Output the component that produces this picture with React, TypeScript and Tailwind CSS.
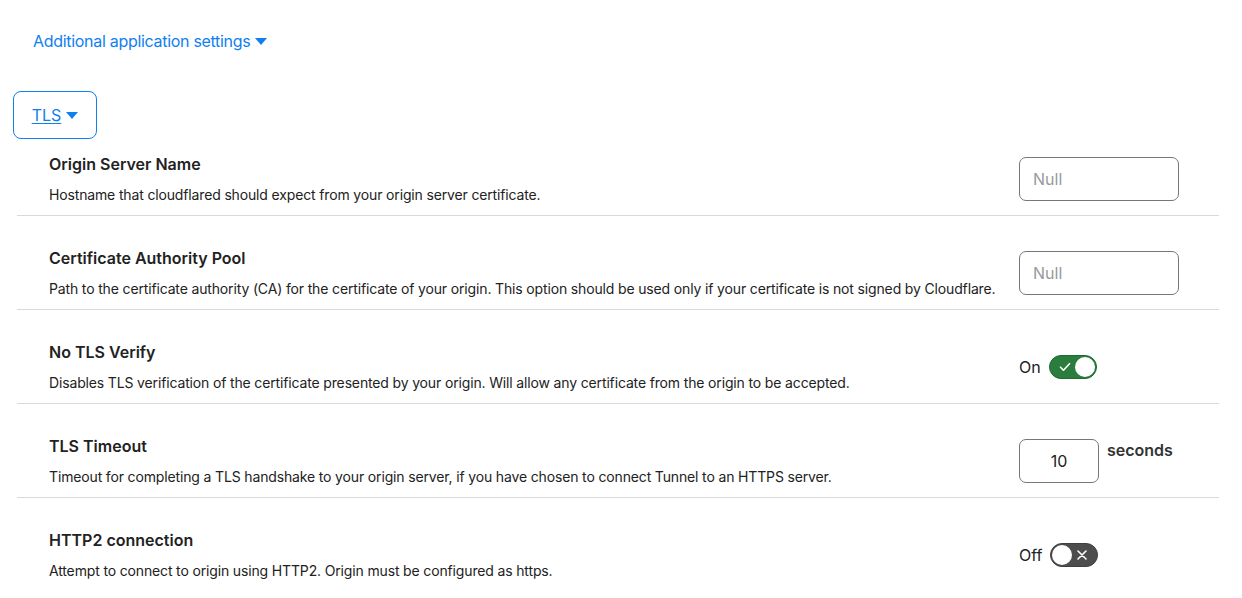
import { useState } from "react";

type Setting = {
  title: string;
  description: string;
  kind: "text" | "toggle" | "number";
  value?: string;
  on?: boolean;
};

const settings: Setting[] = [
  {
    title: "Origin Server Name",
    description: "Hostname that cloudflared should expect from your origin server certificate.",
    kind: "text",
  },
  {
    title: "Certificate Authority Pool",
    description:
      "Path to the certificate authority (CA) for the certificate of your origin. This option should be used only if your certificate is not signed by Cloudflare.",
    kind: "text",
  },
  {
    title: "No TLS Verify",
    description:
      "Disables TLS verification of the certificate presented by your origin. Will allow any certificate from the origin to be accepted.",
    kind: "toggle",
    on: true,
  },
  {
    title: "TLS Timeout",
    description:
      "Timeout for completing a TLS handshake to your origin server, if you have chosen to connect Tunnel to an HTTPS server.",
    kind: "number",
    value: "10",
  },
  {
    title: "HTTP2 connection",
    description: "Attempt to connect to origin using HTTP2. Origin must be configured as https.",
    kind: "toggle",
    on: false,
  },
];

function Caret() {
  return (
    <svg width="12" height="7" viewBox="0 0 12 7" className="ml-[5px]">
      <path d="M0 0h12L6 7z" fill="#1080f0" />
    </svg>
  );
}

function Toggle({ initial }: { initial: boolean }) {
  const [on, setOn] = useState(initial);
  return (
    <button onClick={() => setOn(!on)} className="flex items-center gap-[8px]">
      <span className="text-[16px] text-[#222]">{on ? "On" : "Off"}</span>
      {on ? (
        <span className="relative flex h-[24px] w-[48px] items-center rounded-full border border-[#1f6a33] bg-[#2b7d3e]">
          <svg width="12" height="10" viewBox="0 0 12 10" className="ml-[9px]">
            <path d="M1.5 5.2l3 3 6-6.5" fill="none" stroke="#fff" strokeWidth="1.6" strokeLinecap="round" strokeLinejoin="round" />
          </svg>
          <span className="absolute right-[1px] top-[1px] h-[20px] w-[20px] rounded-full bg-white" />
        </span>
      ) : (
        <span className="relative flex h-[24px] w-[48px] items-center justify-end rounded-full border border-[#3f3f3f] bg-[#4d4d4d]">
          <svg width="10" height="10" viewBox="0 0 10 10" className="mr-[10px]">
            <path d="M1 1l8 8M9 1l-8 8" stroke="#fff" strokeWidth="1.6" strokeLinecap="round" />
          </svg>
          <span className="absolute left-[1px] top-[1px] h-[20px] w-[20px] rounded-full bg-white" />
        </span>
      )}
    </button>
  );
}

function Control({ s }: { s: Setting }) {
  if (s.kind === "text") {
    return (
      <input
        placeholder="Null"
        className="h-[44px] w-[160px] rounded-[7px] border border-[#777] px-[13px] text-[16px] text-[#222] outline-none placeholder:text-[#999]"
      />
    );
  }
  if (s.kind === "number") {
    return (
      <div className="flex items-start gap-[8px]">
        <input
          defaultValue={s.value}
          className="h-[44px] w-[80px] rounded-[7px] border border-[#777] text-center text-[16px] text-[#222] outline-none"
        />
        <span className="-mt-[1px] text-[16px] font-semibold text-[#333]">seconds</span>
      </div>
    );
  }
  return <Toggle initial={!!s.on} />;
}

export default function App() {
  return (
    <div className="min-h-[598px] w-full bg-white font-['Inter','Noto_Sans',sans-serif] text-[#222]">
      <div className="px-[13px] pt-[29px]">
        <button className="ml-[20px] flex items-center text-[16px] tracking-[-0.3px] text-[#1080f0]">
          Additional application settings
          <Caret />
        </button>

        <div className="mt-[38px] flex h-[48px] w-[84px] items-center justify-center rounded-[8px] border border-[#1080f0]">
          <span className="flex items-center text-[16px] text-[#1080f0]">
            <span className="underline underline-offset-2">TLS</span>
            <Caret />
          </span>
        </div>

        {/* settings rows */}
        <div className="ml-[4px] mr-[10px]">
          {settings.map((s, i) => (
            <div
              key={s.title}
              className={`flex items-center border-[#d9d9d9] pb-[10px] pl-[32px] ${i === 0 ? "pt-[13px]" : "pt-[30px]"} ${i < settings.length - 1 ? "border-b" : ""}`}
            >
              <div className="flex-1">
                <div className="h-[24px] text-[16px] font-semibold leading-[24px] text-[#222]">{s.title}</div>
                <div className="mt-[9px] text-[14px] leading-[20px] tracking-[-0.15px] text-[#222]">{s.description}</div>
              </div>
              <div className="w-[200px] shrink-0">
                <Control s={s} />
              </div>
            </div>
          ))}
        </div>
      </div>
    </div>
  );
}
